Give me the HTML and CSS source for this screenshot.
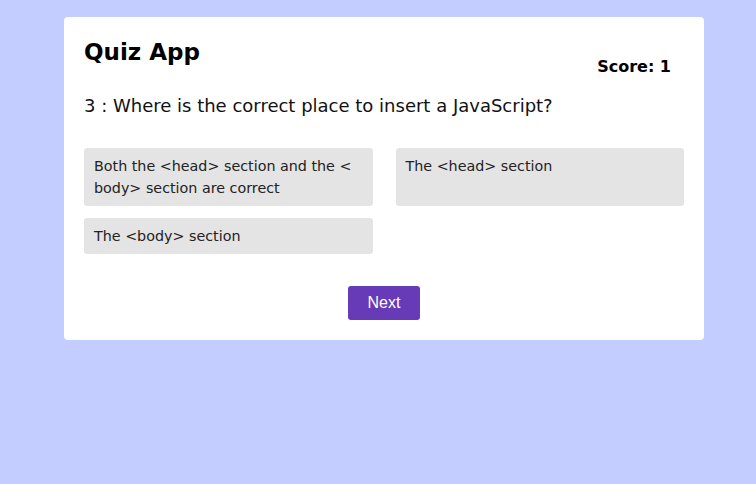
FILE: index.html
```html
<!DOCTYPE html>
<html>
<head>
<meta charset="utf-8">
<link rel="stylesheet" href="styles.css">
</head>
<body>
<div class="card">
  <div class="header">
    <h1 class="title">Quiz App</h1>
    <div class="score">Score: 1</div>
  </div>
  <p class="question">3 : Where is the correct place to insert a JavaScript?</p>
  <div class="options">
    <div class="option">Both the &lt;head&gt; section and the &lt; body&gt; section are correct</div>
    <div class="option">The &lt;head&gt; section</div>
    <div class="option">The &lt;body&gt; section</div>
  </div>
  <div class="actions">
    <button class="next">Next</button>
  </div>
</div>
</body>
</html>
```
FILE: styles.css
```css
html, body {
  margin: 0;
  padding: 0;
}
body {
  background: #c3cdff;
  font-family: "DejaVu Sans", "Open Sans", sans-serif;
  color: #000;
  padding-top: 17px;
  min-height: 484px;
  box-sizing: border-box;
}
.card {
  width: 640px;
  margin-left: 64px;
  background: #fff;
  border-radius: 4px;
  padding: 20px 20px 20px 20px;
  box-sizing: border-box;
}
.header {
  display: flex;
  justify-content: space-between;
  align-items: flex-start;
}
.title {
  margin: 0;
  font-size: 23px;
  font-weight: 700;
  line-height: 30px;
}
.score {
  font-size: 16px;
  font-weight: 700;
  margin-top: 18px;
  margin-right: 13px;
  line-height: 24px;
}
.question {
  margin: 15px 0 0 0;
  font-size: 18px;
  line-height: 24px;
  color: #111;
}
.options {
  display: grid;
  grid-template-columns: 1fr 1fr;
  column-gap: 23px;
  row-gap: 12px;
  margin-top: 30px;
}
.option {
  background: #e4e4e4;
  border-radius: 3px;
  padding: 7px 10px;
  font-size: 14.3px;
  line-height: 22px;
  color: #222;
}
.actions {
  display: flex;
  justify-content: center;
  margin-top: 32px;
}
.next {
  background: #673ab7;
  color: #fff;
  border: none;
  border-radius: 3px;
  width: 72px;
  height: 34px;
  font-family: "Liberation Sans", Arial, sans-serif;
  font-size: 16px;
  padding: 0;
}
```
